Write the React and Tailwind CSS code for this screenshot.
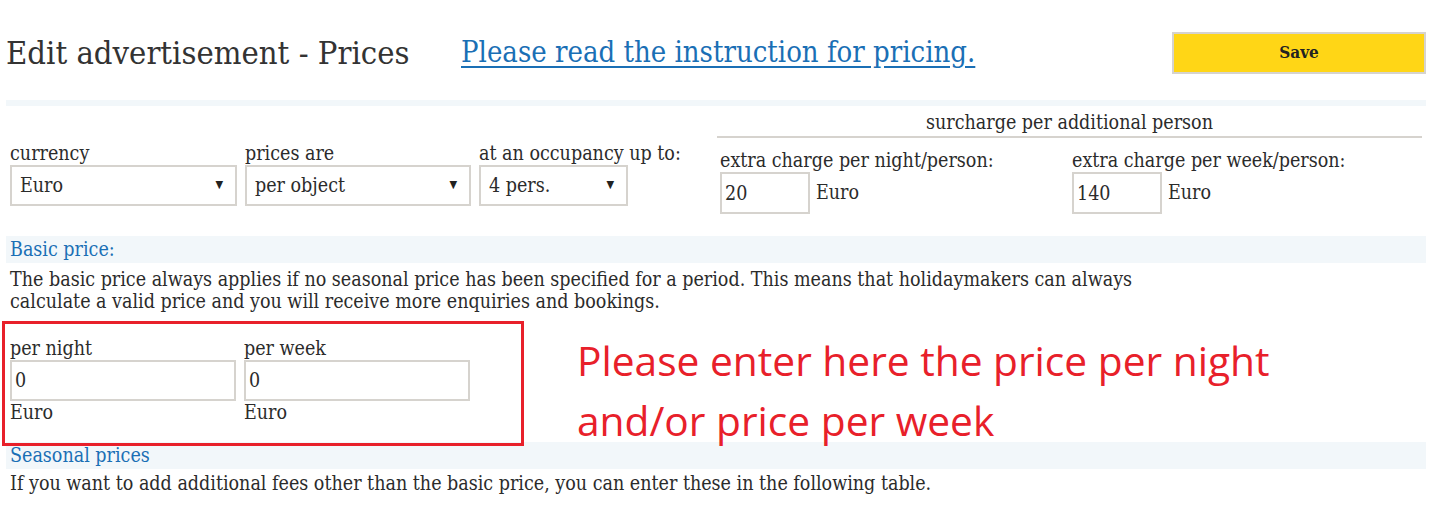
import React from 'react';

const serif = { fontFamily: '"DejaVu Serif Condensed", "DejaVu Serif", serif' };

const FakeSelect = ({ value, width }) => (
  <div className={`flex h-[41px] items-center justify-between border-2 border-[#d6d3ce] bg-white pl-2 pr-3 ${width}`}>
    <span>{value}</span>
    <span className="text-[11px] text-[#222]">▼</span>
  </div>
);

const Field = ({ label, children, className = '' }) => (
  <div className={`flex flex-col ${className}`}>
    <label className="leading-[22px]">{label}</label>
    {children}
  </div>
);

const SectionBar = ({ title }) => (
  <div className="bg-[#f2f7fa] px-1 text-[#1a6fb5] leading-[27px]">{title}</div>
);

const App = () => {
  return (
    <div className="relative min-h-screen bg-white pl-[6px] pr-[18px] text-[19.5px] text-[#2b2b2b]" style={serif}>
      <div className="flex h-[100px] items-center pt-[6px]">
        <h1 className="w-[455px] text-[32.5px] text-[#333]">Edit advertisement - Prices</h1>
        <a href="#" className="text-[29px] text-[#1a6fb5] underline underline-offset-4">
          Please read the instruction for pricing.
        </a>
        <button className="ml-auto h-[42px] w-[254px] border-2 border-[#d6d3ce] bg-[#ffd616] text-[17px] font-bold text-[#222]">
          Save
        </button>
      </div>
      <div className="h-[6px] bg-[#f2f7fa]"></div>

      <div className="flex h-[130px] px-1">
        <div className="flex gap-2 pt-[37px]">
          <Field label="currency">
            <FakeSelect value="Euro" width="w-[227px]" />
          </Field>
          <Field label="prices are">
            <FakeSelect value="per object" width="w-[226px]" />
          </Field>
          <Field label="at an occupancy up to:">
            <FakeSelect value="4 pers." width="w-[149px]" />
          </Field>
        </div>
        <div className="ml-auto flex w-[705px] flex-col">
          <div className="mt-[6px] border-b-2 border-[#d6d3ce] pb-[2px] text-center leading-[22px]">
            surcharge per additional person
          </div>
          <div className="mt-[12px] flex pl-[3px]">
            <Field label="extra charge per night/person:" className="w-[352px]">
              <div className="flex items-center gap-[6px]">
                <input readOnly value="20" className="h-[42px] w-[90px] border-2 border-[#d6d3ce] px-[3px] outline-none" />
                <span>Euro</span>
              </div>
            </Field>
            <Field label="extra charge per week/person:">
              <div className="flex items-center gap-[6px]">
                <input readOnly value="140" className="h-[42px] w-[90px] border-2 border-[#d6d3ce] px-[3px] outline-none" />
                <span>Euro</span>
              </div>
            </Field>
          </div>
        </div>
      </div>

      <SectionBar title="Basic price:" />
      <p className="mt-[6px] px-1 leading-[22px]">
        The basic price always applies if no seasonal price has been specified for a period. This means that holidaymakers can always
        <br />
        calculate a valid price and you will receive more enquiries and bookings.
      </p>

      <div className="flex h-[129px] gap-2 px-1 pt-[25px]">
        <Field label="per night">
          <input readOnly value="0" className="h-[41px] w-[226px] border-2 border-[#d6d3ce] px-[3px] outline-none" />
          <span className="leading-[24px]">Euro</span>
        </Field>
        <Field label="per week">
          <input readOnly value="0" className="h-[41px] w-[226px] border-2 border-[#d6d3ce] px-[3px] outline-none" />
          <span className="leading-[24px]">Euro</span>
        </Field>
      </div>

      <SectionBar title="Seasonal prices" />
      <p className="mt-[4px] px-1 leading-[22px]">
        If you want to add additional fees other than the basic price, you can enter these in the following table.
      </p>

      {/* annotation overlay */}
      <div className="absolute left-[2px] top-[321px] h-[125px] w-[522px] border-[3px] border-[#e8202a]"></div>
      <div
        className="absolute left-[577px] top-[330px] text-[40.7px] leading-[60px] text-[#e8202a]"
        style={{ fontFamily: '"Open Sans", sans-serif' }}
      >
        Please enter here the price per night
        <br />
        and/or price per week
      </div>
    </div>
  );
};

export default App;
